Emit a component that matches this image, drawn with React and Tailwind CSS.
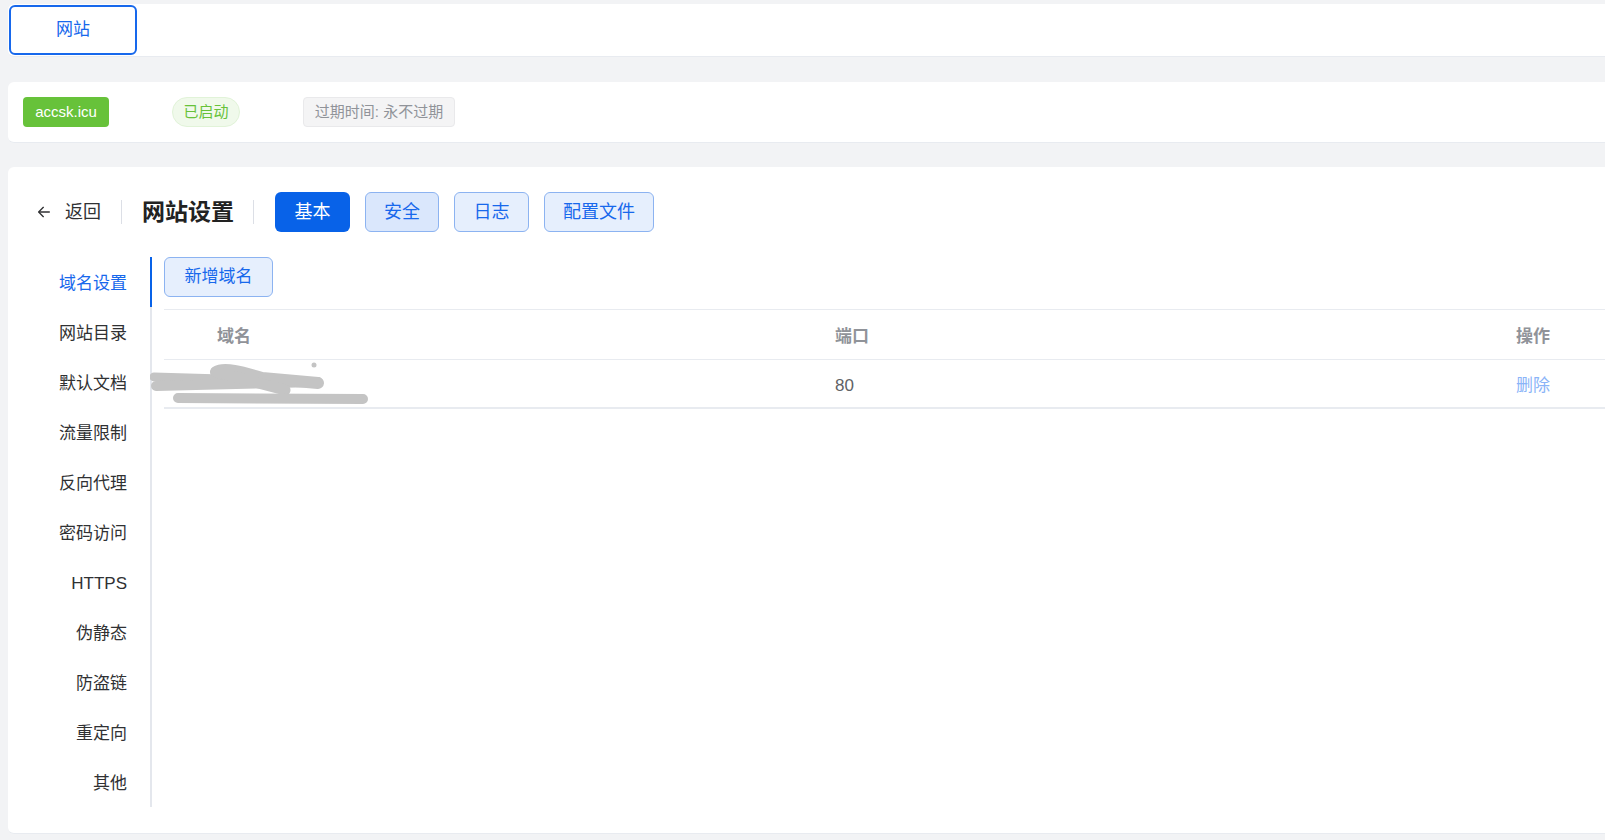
import React from 'react';

// Site settings page: tab bar, site status strip, settings card with side menu + domain table

const FONT = { fontFamily: '"Liberation Sans", "Noto Sans CJK SC", sans-serif' };

const menu = ['域名设置', '网站目录', '默认文档', '流量限制', '反向代理', '密码访问', 'HTTPS', '伪静态', '防盗链', '重定向', '其他'];

function Scribble() {
  return (
    <svg className="absolute left-[-14px] top-[0px]" width="225" height="48" viewBox="0 0 225 48" fill="none">
      <g stroke="#c4c4c4" strokeLinecap="round" strokeLinejoin="round">
        <path d="M4 17 L110 20" strokeWidth="9" />
        <path d="M6 26 L168 22" strokeWidth="10" />
        <path d="M66 12 C74 7 92 12 112 18 L168 23" strokeWidth="12" />
        <path d="M66 12 L135 30" strokeWidth="11" />
        <path d="M28 38 L213 39" strokeWidth="10" />
      </g>
      <circle cx="164" cy="5" r="2.5" fill="#c4c4c4" />
    </svg>
  );
}

export default function App() {
  return (
    <div className="min-h-screen w-full bg-[#f2f3f5] pl-2 pt-1 pb-2 overflow-hidden text-[#303133]" style={FONT}>
      {/* tabs */}
      <div className="h-[53px] bg-white rounded-l-md border-b border-[#e8ebf0] pl-px pt-px">
        <button className="w-[128px] h-[50px] rounded-md border-2 border-[#1768ec] text-[#1768ec] text-[17px] bg-white">网站</button>
      </div>

      {/* site status */}
      <div className="mt-[25px] h-[61px] bg-white rounded-l-md border-b border-[#e8ebf0] flex items-center px-[15px]">
        <span className="h-[30px] w-[86px] flex items-center justify-center rounded bg-[#67c23a] text-white text-[15px]">accsk.icu</span>
        <span className="ml-[63px] h-[30px] w-[68px] flex items-center justify-center rounded-full bg-[#f0f9eb] border border-[#e1f3d8] text-[#67c23a] text-[15px]">已启动</span>
        <span className="ml-[63px] h-[30px] w-[152px] flex items-center justify-center rounded bg-[#f4f4f5] border border-[#e9e9eb] text-[#909399] text-[15px]">过期时间: 永不过期</span>
      </div>

      {/* settings card */}
      <div className="mt-[24px] h-[667px] bg-white rounded-l-md border-b border-[#e8ebf0] pt-[25px]">
        <div className="flex items-center h-10 pl-[28px]">
          <svg width="16" height="16" viewBox="0 0 24 24" fill="none" stroke="#303133" strokeWidth="2" strokeLinecap="round" strokeLinejoin="round">
            <path d="M20 12H5" />
            <path d="M11 5l-7 7 7 7" />
          </svg>
          <span className="ml-[13px] text-[18px]">返回</span>
          <span className="ml-[20px] w-px h-6 bg-[#dcdfe6]" />
          <span className="ml-[20px] text-[23px] font-bold text-[#222]">网站设置</span>
          <span className="ml-[19px] w-px h-6 bg-[#dcdfe6]" />
          <div className="ml-[21px] flex gap-[15px]">
            <button className="h-10 w-[75px] rounded-md bg-[#0862e8] text-white text-[18px]">基本</button>
            <button className="h-10 w-[74px] rounded-md bg-[#dae7fc] border border-[#8cb3f1] text-[#1768ec] text-[18px]">安全</button>
            <button className="h-10 w-[75px] rounded-md bg-[#e6effd] border border-[#8cb3f1] text-[#1768ec] text-[18px]">日志</button>
            <button className="h-10 w-[110px] rounded-md bg-[#e6effd] border border-[#8cb3f1] text-[#1768ec] text-[18px]">配置文件</button>
          </div>
        </div>

        <div className="mt-[25px] flex">
          <div className="w-[144px] shrink-0">
            {menu.map((m, i) => (
              <div
                key={m}
                className={`h-[50px] pt-1 flex items-center justify-end pr-[23px] text-[17px] border-r-2 ${i === 0 ? 'border-[#0862e8] text-[#1768ec]' : 'border-[#e4e7ed] text-[#303133]'}`}
              >
                {m}
              </div>
            ))}
          </div>

          <div className="flex-1 pl-[12px]">
            <button className="h-10 w-[109px] rounded-md bg-[#e6effd] border border-[#8cb3f1] text-[#1768ec] text-[17px]">新增域名</button>
            <div className="mt-[12px] w-[1500px] border-t border-[#e8ebf0]">
              <div className="flex items-center h-[50px] pt-1 border-b border-[#e8ebf0] text-[17px] font-bold text-[#909399]">
                <div className="w-[671px] pl-[53px]">域名</div>
                <div className="w-[681px]">端口</div>
                <div>操作</div>
              </div>
              <div className="relative flex items-center h-[49px] pt-1 border-b-2 border-[#e8ebf0] text-[17px] text-[#606266]">
                <Scribble />
                <div className="w-[671px] pl-[53px]" />
                <div className="w-[681px]">80</div>
                <div className="text-[#8ab4f8]">删除</div>
              </div>
            </div>
          </div>
        </div>
      </div>
    </div>
  );
}
